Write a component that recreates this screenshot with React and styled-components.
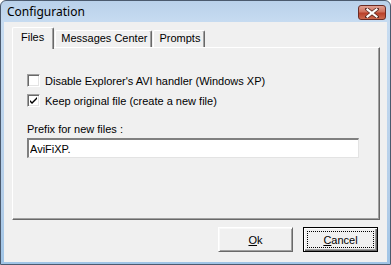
import React from 'react'
import styled, { createGlobalStyle } from 'styled-components'

const GlobalStyle = createGlobalStyle`
  html, body {
    margin: 0;
    padding: 0;
    background: #ffffff;
  }
  * { box-sizing: border-box; }
`;

export default function App() {
  return (
    <>
      <GlobalStyle />
      <Window>
        <TitleBar>
          <Title>Configuration</Title>
          <CloseButton aria-label="Close">
            <svg width="14" height="10" viewBox="0 0 14 10">
              <path d="M2 1 L12 9 M12 1 L2 9" stroke="#5a2a22" strokeWidth="3.6" strokeLinecap="square" />
              <path d="M2.5 1.5 L11.5 8.5 M11.5 1.5 L2.5 8.5" stroke="#ffffff" strokeWidth="2.2" strokeLinecap="square" />
            </svg>
          </CloseButton>
        </TitleBar>
        <Client>
          <TabRow>
            <Tab active>Files</Tab>
            <Tab>Messages Center</Tab>
            <Tab>Prompts</Tab>
          </TabRow>
          <Panel>
            <CheckRow>
              <CheckBox />
              <Label>Disable Explorer's AVI handler (Windows XP)</Label>
            </CheckRow>
            <CheckRow>
              <CheckBox>
                <svg width="9" height="9" viewBox="0 0 9 9">
                  <path d="M1 4 L3 6 L8 1 L8 3 L3 8 L1 6 Z" fill="#000" />
                </svg>
              </CheckBox>
              <Label>Keep original file (create a new file)</Label>
            </CheckRow>
            <FieldLabel>Prefix for new files :</FieldLabel>
            <TextBox defaultValue="AviFiXP." />
          </Panel>
          <ButtonRow>
            <Button><u>O</u>k</Button>
            <Button isDefault>
              <Focus><u>C</u>ancel</Focus>
            </Button>
          </ButtonRow>
        </Client>
      </Window>
    </>
  )
}

const Window = styled.div`
  width: 391px;
  height: 265px;
  border: 1px solid #4b5a6e;
  border-radius: 6px 6px 0 0;
  background: linear-gradient(to bottom, #b9d1ea 0px, #c7dcf1 22px, #b3cde8 200px, #9fc4e6 265px);
  padding: 0 3px 2px 3px;
  display: flex;
  flex-direction: column;
  font-family: "Liberation Sans", Arial, sans-serif;
`;

const TitleBar = styled.div`
  height: 21px;
  display: flex;
  align-items: center;
  justify-content: space-between;
  padding: 0 1px 0 3px;
`;

const Title = styled.div`
  font-family: "Noto Sans", "Liberation Sans", sans-serif;
  font-size: 12px;
  color: #000;
`;

const CloseButton = styled.div`
  width: 28px;
  height: 15px;
  margin-top: 2px;
  border: 1px solid #6b2b24;
  border-radius: 3px;
  background: linear-gradient(to bottom, #e0a194 0%, #d0715d 45%, #b9402a 55%, #cc6a50 100%);
  display: flex;
  align-items: center;
  justify-content: center;
`;

const Client = styled.div`
  flex: 1;
  background: #f0f0f0;
  padding: 5px 7px 0 8px;
  display: flex;
  flex-direction: column;
`;

const TabRow = styled.div`
  display: flex;
  align-items: flex-end;
  height: 20px;
  position: relative;
  z-index: 1;
`;

const Tab = styled.div`
  height: ${p => (p.active ? '22px' : '17px')};
  margin-bottom: ${p => (p.active ? '-2px' : '0')};
  margin-left: ${p => (p.active ? '0' : '1px')};
  padding: ${p => (p.active ? '3px 9px 0 8px' : '1px 4px 0 5px')};
  background: #f0f0f0;
  border-top: 1px solid #ffffff;
  border-left: 1px solid #ffffff;
  border-right: 1px solid #696969;
  box-shadow: inset -1px 0 0 #a0a0a0;
  border-radius: 2px 2px 0 0;
  font-size: 11px;
  color: #000;
  white-space: nowrap;
`;

const Panel = styled.div`
  height: 173px;
  border-top: 1px solid #ffffff;
  border-left: 1px solid #ffffff;
  border-right: 1px solid #696969;
  border-bottom: 1px solid #696969;
  box-shadow: inset -1px -1px 0 #a0a0a0;
  padding: 26px 0 0 14px;
  display: flex;
  flex-direction: column;
`;

const CheckRow = styled.div`
  display: flex;
  align-items: center;
  height: 13px;
  margin-bottom: 7px;
`;

const CheckBox = styled.div`
  width: 13px;
  height: 13px;
  flex: none;
  background: #ffffff;
  border-top: 1px solid #a0a0a0;
  border-left: 1px solid #a0a0a0;
  border-right: 1px solid #ffffff;
  border-bottom: 1px solid #ffffff;
  box-shadow: inset 1px 1px 0 #696969, inset -1px -1px 0 #e3e3e3;
  display: flex;
  align-items: center;
  justify-content: center;
  margin-right: 5px;
`;

const Label = styled.span`
  font-size: 11px;
  color: #000;
  white-space: nowrap;
`;

const FieldLabel = styled.div`
  font-size: 11px;
  color: #000;
  margin-top: 9px;
  height: 13px;
`;

const TextBox = styled.input`
  width: 332px;
  height: 20px;
  margin-top: 2px;
  border-top: 2px solid #808080;
  border-left: 2px solid #808080;
  border-right: 1px solid #e3e3e3;
  border-bottom: 1px solid #e3e3e3;
  background: #ffffff;
  font-family: "Liberation Sans", Arial, sans-serif;
  font-size: 11px;
  padding: 0 1px;
  outline: none;
  color: #000;
`;

const ButtonRow = styled.div`
  display: flex;
  justify-content: flex-end;
  gap: 10px;
  padding-right: 2px;
  margin-top: 7px;
`;

const Button = styled.div`
  width: 75px;
  height: 25px;
  background: #f0f0f0;
  border-top: 1px solid ${p => (p.isDefault ? '#000' : '#ffffff')};
  border-left: 1px solid ${p => (p.isDefault ? '#000' : '#ffffff')};
  border-right: 1px solid ${p => (p.isDefault ? '#000' : '#696969')};
  border-bottom: 1px solid ${p => (p.isDefault ? '#000' : '#696969')};
  box-shadow: ${p =>
    p.isDefault
      ? 'inset 1px 1px 0 #ffffff, inset -1px -1px 0 #696969, inset -2px -2px 0 #a0a0a0'
      : 'inset 1px 1px 0 #f8f8f8, inset -1px -1px 0 #a0a0a0'};
  display: flex;
  align-items: center;
  justify-content: center;
  font-size: 11px;
  color: #000;
  padding: ${p => (p.isDefault ? '3px' : '0')};
`;

const Focus = styled.div`
  flex: 1;
  align-self: stretch;
  border: 1px dotted #000;
  display: flex;
  align-items: center;
  justify-content: center;
`;
